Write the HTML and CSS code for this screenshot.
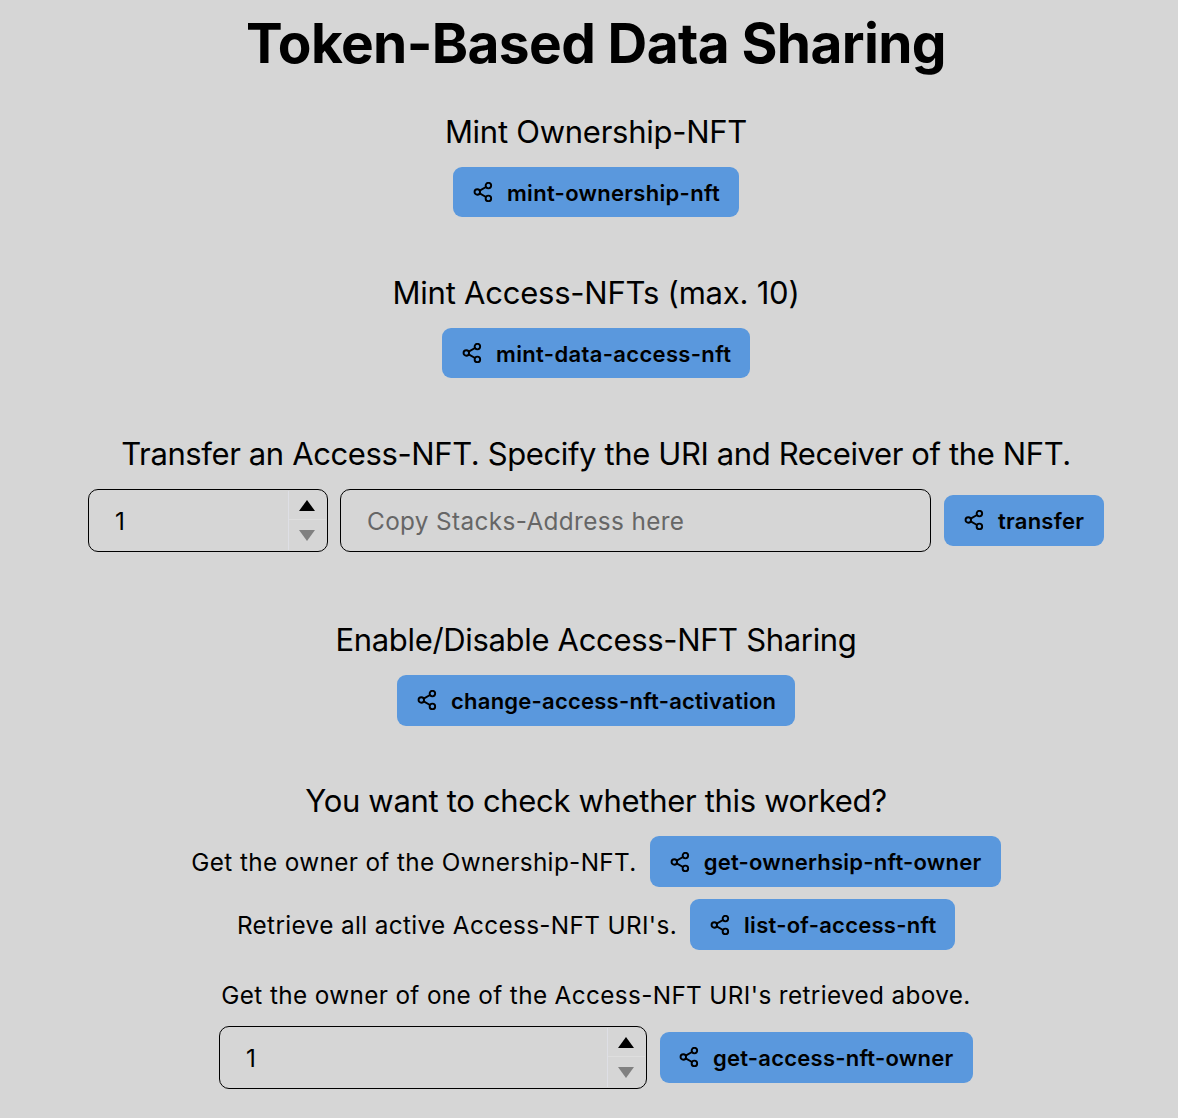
FILE: index.html
```html
<!DOCTYPE html>
<html lang="en">
<head>
<meta charset="utf-8">
<title>Token-Based Data Sharing</title>
<link rel="stylesheet" href="styles.css">
</head>
<body>
<svg class="defs" width="0" height="0"><symbol id="share" viewBox="0 0 20 20"><g fill="none" stroke="currentColor" stroke-width="1.9"><circle cx="4.3" cy="10" r="2.75"/><circle cx="15.4" cy="3.6" r="2.75"/><circle cx="15.4" cy="16.4" r="2.75"/><path d="M6.7 8.6l6.3-3.6M6.7 11.4l6.3 3.6"/></g></symbol></svg>
<main class="page">
<h1 class="title">Token-Based Data Sharing</h1>
<section class="section">
<h2 class="heading h-own">Mint Ownership-NFT</h2>
<button class="btn b-own"><svg class="icon"><use href="#share"/></svg><span class="label">mint-ownership-nft</span></button>
</section>
<section class="section">
<h2 class="heading h-access">Mint Access-NFTs (max. 10)</h2>
<button class="btn b-data"><svg class="icon"><use href="#share"/></svg><span class="label">mint-data-access-nft</span></button>
</section>
<section class="section transfer">
<h2 class="heading h-transfer">Transfer an Access-NFT. Specify the URI and Receiver of the NFT.</h2>
<div class="row">
<div class="field number small"><span class="value">1</span><span class="stepper"><i class="up"></i><i class="down"></i></span></div>
<div class="field address">Copy Stacks-Address here</div>
<button class="btn b-transfer"><svg class="icon raised"><use href="#share"/></svg><span class="label">transfer</span></button>
</div>
</section>
<section class="section">
<h2 class="heading h-enable">Enable/Disable Access-NFT Sharing</h2>
<button class="btn b-change"><svg class="icon raised"><use href="#share"/></svg><span class="label">change-access-nft-activation</span></button>
</section>
<section class="section check">
<h2 class="heading h-check">You want to check whether this worked?</h2>
<div class="row"><p class="text">Get the owner of the Ownership-NFT.</p><button class="btn b-owner"><svg class="icon"><use href="#share"/></svg><span class="label">get-ownerhsip-nft-owner</span></button></div>
<div class="row second"><p class="text">Retrieve all active Access-NFT URI's.</p><button class="btn b-list"><svg class="icon"><use href="#share"/></svg><span class="label">list-of-access-nft</span></button></div>
<p class="text last">Get the owner of one of the Access-NFT URI's retrieved above.</p>
<div class="row"><div class="field number large"><span class="value">1</span><span class="stepper"><i class="up"></i><i class="down"></i></span></div><button class="btn b-get"><svg class="icon raised"><use href="#share"/></svg><span class="label">get-access-nft-owner</span></button></div>
</section>
</main>
</body>
</html>
```
FILE: styles.css
```css
* { box-sizing: border-box; }
body { margin: 0; background: #d6d6d6; color: #000; font-family: Inter, "Liberation Sans", sans-serif; overflow: hidden; }
.defs { display: block; height: 0; }
.page { width: 1178px; height: 1118px; padding-left: 14px; display: flex; flex-direction: column; align-items: center; }
.title { margin: 8px 0 0; height: 72px; flex: none; line-height: 70px; font-size: 55px; font-weight: 700; letter-spacing: -0.63px; white-space: nowrap; }
.section { height: 161px; padding-top: 32px; flex: none; display: flex; flex-direction: column; align-items: center; }
.transfer { height: 186px; }
.check { height: auto; }
.heading { margin: 0 0 15px; height: 40px; line-height: 39px; font-size: 31px; font-weight: 400; white-space: nowrap; flex: none; }
.h-own { letter-spacing: -0.26px; }
.h-access { letter-spacing: -0.23px; }
.h-transfer { letter-spacing: -0.38px; }
.h-enable { letter-spacing: -0.33px; }
.h-check { letter-spacing: -0.32px; }
.btn { display: flex; align-items: center; height: 51px; padding: 0 0 0 20px; gap: 14px; border: 0; border-radius: 9px; background: #5a98dd; color: #000; font: 600 22px/49px Inter, sans-serif; letter-spacing: 0.24px; white-space: nowrap; flex: none; }
.label { padding-top: 2px; }
.b-own { width: 286px; height: 50px; letter-spacing: 0.3px; }
.b-data { width: 308px; height: 50px; letter-spacing: 0.35px; }
.b-transfer { width: 160px; }
.b-change { width: 398px; }
.b-owner { width: 351px; }
.b-list { width: 265px; letter-spacing: 0.27px; }
.b-get { width: 313px; padding-left: 19px; }
.icon { width: 20px; height: 20px; flex: none; }
.raised { margin-bottom: 1px; }
.row { display: flex; align-items: center; justify-content: center; gap: 13px; }
.second { margin-top: 12px; }
.field { height: 63px; border: 1px solid #000; border-radius: 10px; display: flex; align-items: center; font-size: 24.3px; line-height: 64px; padding-left: 26px; flex: none; }
.small { width: 240px; margin-right: -1px; }
.address { width: 591px; color: #666; letter-spacing: 0.38px; }
.large { width: 428px; }
.number { justify-content: space-between; }
.text { margin: 0; font-size: 24.3px; line-height: 40px; letter-spacing: 0.37px; white-space: nowrap; }
.last { margin: 25px 0 11px; }
.stepper { width: 39px; height: 59px; display: flex; flex-direction: column; align-items: center; gap: 19px; padding: 9px 2px 0 0; border-left: 1px solid #dedfe5; background: linear-gradient(#dedede, #dedede) 0 28px / 37px 1px no-repeat; }
.up, .down { border: 8px solid transparent; border-top: 0; border-bottom: 11px solid #000; }
.down { border-bottom: 0; border-top: 11px solid #808080; }
```
